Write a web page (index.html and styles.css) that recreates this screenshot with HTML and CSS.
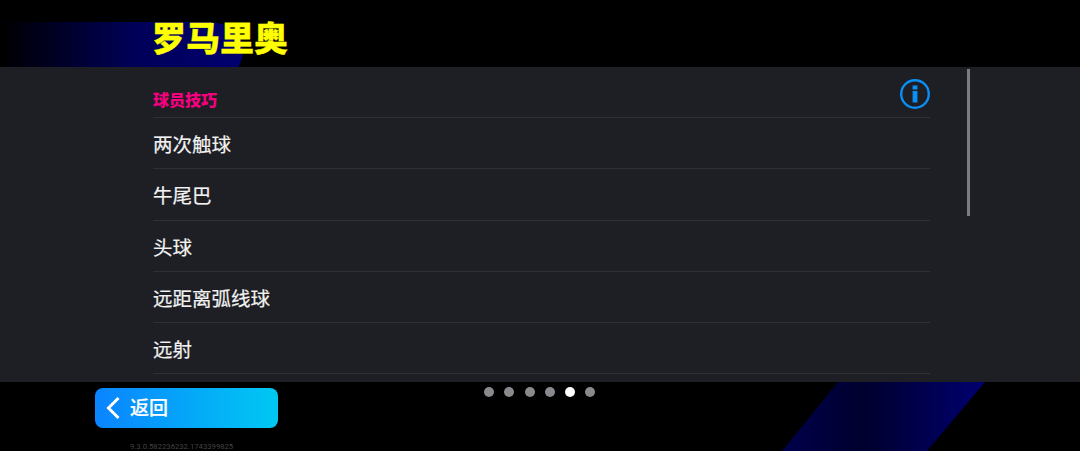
FILE: index.html
```html
<!DOCTYPE html>
<html lang="zh">
<head>
    <meta charset="UTF-8">
    <title>罗马里奥</title>
    <link rel="stylesheet" href="styles.css">
</head>
<body>
    <svg class="decor" width="1080" height="451" viewBox="0 0 1080 451" aria-hidden="true">
        <defs>
            <linearGradient id="fadeTop" x1="0" x2="1" y1="0" y2="0">
                <stop offset="0" stop-color="#000"/>
                <stop offset="0.55" stop-color="#000058"/>
                <stop offset="1" stop-color="#000070"/>
            </linearGradient>
            <linearGradient id="fadeBottom" x1="0" x2="1" y1="0" y2="0">
                <stop offset="0" stop-color="#00004c"/>
                <stop offset="0.4" stop-color="#00002e"/>
                <stop offset="1" stop-color="#000070"/>
            </linearGradient>
        </defs>
        <path d="M0 22H205Q243 22 243 50Q243 60 238 67H0Z" fill="url(#fadeTop)"/>
        <path d="M838 382H985L927 451H782Z" fill="url(#fadeBottom)"/>
    </svg>
    <header class="top">
        <h1 class="name">罗马里奥</h1>
    </header>
    <main class="panel">
        <div class="list">
            <div class="list-head">
                <span class="section">球员技巧</span>
                <svg class="info" width="30" height="30" viewBox="0 0 30 30">
                    <circle cx="15" cy="15" r="13.8" fill="none" stroke="#0a8ff5" stroke-width="2.4"/>
                    <rect x="12.6" y="6.5" width="4.8" height="4" fill="#0a8ff5"/>
                    <rect x="12.6" y="12" width="4.8" height="11.5" fill="#0a8ff5"/>
                </svg>
            </div>
            <div class="row">两次触球</div>
            <div class="row">牛尾巴</div>
            <div class="row">头球</div>
            <div class="row">远距离弧线球</div>
            <div class="row">远射</div>
        </div>
        <div class="scrollbar"></div>
    </main>
    <footer class="bottom">
        <div class="back-col">
            <a class="back">
                <svg width="16" height="24" viewBox="0 0 16 24">
                    <path d="M13.5 2L3.5 12L13.5 22" fill="none" stroke="#fff" stroke-width="3"/>
                </svg>
                <span class="back-label">返回</span>
            </a>
            <div class="version">9.3.0.582236232.1743399825</div>
        </div>
        <div class="dots">
            <i></i><i></i><i></i><i></i><i class="on"></i><i></i>
        </div>
    </footer>
</body>
</html>
```

FILE: styles.css
```css
html, body {
    margin: 0;
    height: 451px;
    overflow: hidden;
}
body {
    position: relative;
    background-color: #000;
    color: #fff;
    font-family: "Noto Sans CJK SC", "Noto Sans", sans-serif;
}
.decor {
    position: absolute;
    left: 0;
    top: 0;
}
.top {
    position: relative;
    height: 67px;
    padding-left: 152px;
    display: flex;
    align-items: center;
}
.name {
    margin: 0 0 -6px;
    font-size: 34px;
    line-height: 40px;
    font-weight: 900;
    color: #ffff00;
    -webkit-text-stroke: 0.3px #ffff00;
}
.panel {
    position: relative;
    height: 315px;
    background-color: #1e1f24;
    overflow: hidden;
    display: flex;
}
.list {
    width: 777px;
    margin-left: 153px;
}
.list-head {
    height: 50px;
    display: flex;
    justify-content: space-between;
    align-items: flex-end;
    border-bottom: 1px solid #2f3035;
}
.section {
    font-size: 16px;
    line-height: 24px;
    font-weight: 900;
    color: #f5007f;
    margin-bottom: 6px;
}
.info {
    margin-bottom: 8px;
}
.row {
    height: 50.3px;
    line-height: 52px;
    font-size: 19.5px;
    color: #f2f2f2;
    border-bottom: 1px solid #2f3035;
    -webkit-text-stroke: 0.2px #f2f2f2;
}
.scrollbar {
    width: 3px;
    height: 147px;
    margin: 2px 0 0 37px;
    background-color: #7b7c80;
}
.bottom {
    position: relative;
    height: 69px;
    display: flex;
}
.back-col {
    margin-left: 95px;
    padding-top: 6px;
    width: 183px;
}
.back {
    height: 40px;
    border-radius: 8px;
    background: linear-gradient(90deg, #0a84ff, #00c8f2);
    display: flex;
    align-items: center;
    gap: 9px;
    padding-left: 10px;
    font-size: 19px;
    font-weight: 500;
    -webkit-text-stroke: 0.2px #fff;
}
.back-label {
    margin-bottom: 3px;
}
.version {
    margin: 14px 0 0 35px;
    font-family: Roboto, sans-serif;
    font-size: 7.7px;
    line-height: 10px;
    color: #444;
    white-space: nowrap;
}
.dots {
    margin: 5px 0 0 206px;
    display: flex;
    gap: 10.3px;
    height: 10px;
}
.dots i {
    width: 10px;
    height: 10px;
    border-radius: 50%;
    background-color: #8a8a8e;
}
.dots i.on {
    background-color: #fff;
}
```
